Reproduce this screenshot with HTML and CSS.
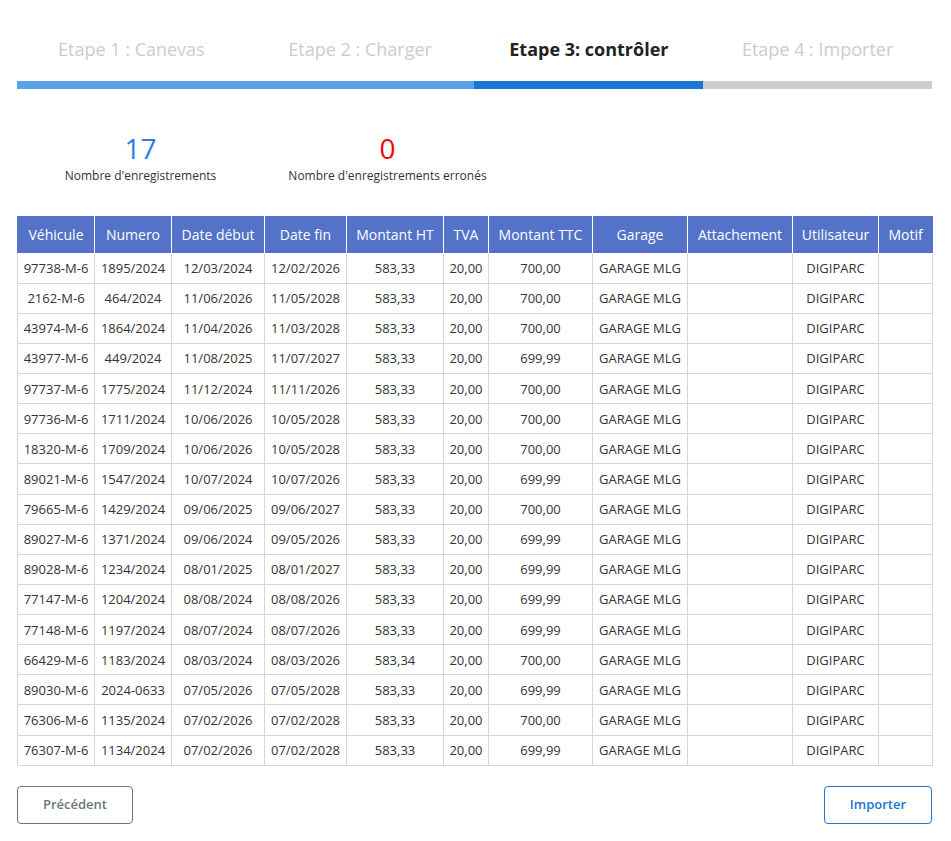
FILE: index.html
```html
<!DOCTYPE html>
<html lang="fr">
<head>
<meta charset="utf-8">
<title>Import</title>
<link rel="stylesheet" href="styles.css">
</head>
<body>
<div class="page">
  <div class="steps">
    <div class="step">Etape 1 : Canevas</div>
    <div class="step">Etape 2 : Charger</div>
    <div class="step active">Etape 3: contrôler</div>
    <div class="step">Etape 4 : Importer</div>
  </div>
  <div class="progress">
    <div class="seg done"></div>
    <div class="seg current"></div>
    <div class="seg todo"></div>
  </div>
  <div class="stats">
    <div class="stat"><div class="num ok">17</div><div class="lbl">Nombre d'enregistrements</div></div>
    <div class="stat"><div class="num err">0</div><div class="lbl">Nombre d'enregistrements erronés</div></div>
  </div>
  <table class="grid">
    <colgroup>
      <col style="width:77px"><col style="width:77px"><col style="width:93px"><col style="width:82px"><col style="width:97px"><col style="width:45px"><col style="width:104px"><col style="width:95px"><col style="width:105px"><col style="width:86px"><col style="width:54px">
    </colgroup>
    <thead>
      <tr><th>Véhicule</th><th>Numero</th><th>Date début</th><th>Date fin</th><th>Montant HT</th><th>TVA</th><th>Montant TTC</th><th>Garage</th><th>Attachement</th><th>Utilisateur</th><th>Motif</th></tr>
    </thead>
    <tbody>
      <tr><td>97738-M-6</td><td>1895/2024</td><td>12/03/2024</td><td>12/02/2026</td><td>583,33</td><td>20,00</td><td>700,00</td><td>GARAGE MLG</td><td></td><td>DIGIPARC</td><td></td></tr>
      <tr><td>2162-M-6</td><td>464/2024</td><td>11/06/2026</td><td>11/05/2028</td><td>583,33</td><td>20,00</td><td>700,00</td><td>GARAGE MLG</td><td></td><td>DIGIPARC</td><td></td></tr>
      <tr><td>43974-M-6</td><td>1864/2024</td><td>11/04/2026</td><td>11/03/2028</td><td>583,33</td><td>20,00</td><td>700,00</td><td>GARAGE MLG</td><td></td><td>DIGIPARC</td><td></td></tr>
      <tr><td>43977-M-6</td><td>449/2024</td><td>11/08/2025</td><td>11/07/2027</td><td>583,33</td><td>20,00</td><td>699,99</td><td>GARAGE MLG</td><td></td><td>DIGIPARC</td><td></td></tr>
      <tr><td>97737-M-6</td><td>1775/2024</td><td>11/12/2024</td><td>11/11/2026</td><td>583,33</td><td>20,00</td><td>700,00</td><td>GARAGE MLG</td><td></td><td>DIGIPARC</td><td></td></tr>
      <tr><td>97736-M-6</td><td>1711/2024</td><td>10/06/2026</td><td>10/05/2028</td><td>583,33</td><td>20,00</td><td>700,00</td><td>GARAGE MLG</td><td></td><td>DIGIPARC</td><td></td></tr>
      <tr><td>18320-M-6</td><td>1709/2024</td><td>10/06/2026</td><td>10/05/2028</td><td>583,33</td><td>20,00</td><td>700,00</td><td>GARAGE MLG</td><td></td><td>DIGIPARC</td><td></td></tr>
      <tr><td>89021-M-6</td><td>1547/2024</td><td>10/07/2024</td><td>10/07/2026</td><td>583,33</td><td>20,00</td><td>699,99</td><td>GARAGE MLG</td><td></td><td>DIGIPARC</td><td></td></tr>
      <tr><td>79665-M-6</td><td>1429/2024</td><td>09/06/2025</td><td>09/06/2027</td><td>583,33</td><td>20,00</td><td>700,00</td><td>GARAGE MLG</td><td></td><td>DIGIPARC</td><td></td></tr>
      <tr><td>89027-M-6</td><td>1371/2024</td><td>09/06/2024</td><td>09/05/2026</td><td>583,33</td><td>20,00</td><td>699,99</td><td>GARAGE MLG</td><td></td><td>DIGIPARC</td><td></td></tr>
      <tr><td>89028-M-6</td><td>1234/2024</td><td>08/01/2025</td><td>08/01/2027</td><td>583,33</td><td>20,00</td><td>699,99</td><td>GARAGE MLG</td><td></td><td>DIGIPARC</td><td></td></tr>
      <tr><td>77147-M-6</td><td>1204/2024</td><td>08/08/2024</td><td>08/08/2026</td><td>583,33</td><td>20,00</td><td>699,99</td><td>GARAGE MLG</td><td></td><td>DIGIPARC</td><td></td></tr>
      <tr><td>77148-M-6</td><td>1197/2024</td><td>08/07/2024</td><td>08/07/2026</td><td>583,33</td><td>20,00</td><td>699,99</td><td>GARAGE MLG</td><td></td><td>DIGIPARC</td><td></td></tr>
      <tr><td>66429-M-6</td><td>1183/2024</td><td>08/03/2024</td><td>08/03/2026</td><td>583,34</td><td>20,00</td><td>700,00</td><td>GARAGE MLG</td><td></td><td>DIGIPARC</td><td></td></tr>
      <tr><td>89030-M-6</td><td>2024-0633</td><td>07/05/2026</td><td>07/05/2028</td><td>583,33</td><td>20,00</td><td>699,99</td><td>GARAGE MLG</td><td></td><td>DIGIPARC</td><td></td></tr>
      <tr><td>76306-M-6</td><td>1135/2024</td><td>07/02/2026</td><td>07/02/2028</td><td>583,33</td><td>20,00</td><td>700,00</td><td>GARAGE MLG</td><td></td><td>DIGIPARC</td><td></td></tr>
      <tr><td>76307-M-6</td><td>1134/2024</td><td>07/02/2026</td><td>07/02/2028</td><td>583,33</td><td>20,00</td><td>699,99</td><td>GARAGE MLG</td><td></td><td>DIGIPARC</td><td></td></tr>
    </tbody>
  </table>
  <div class="actions">
    <button class="btn prev">Précédent</button>
    <button class="btn next">Importer</button>
  </div>
</div>
</body>
</html>
```

FILE: styles.css
```css
* { box-sizing: border-box; }
html, body { margin: 0; padding: 0; background: #fff; }
body {
  font-family: "Open Sans", "Noto Sans", "Liberation Sans", sans-serif;
  color: #333;
}
.page {
  width: 915px;
  margin-left: 17px;
  padding-top: 37px;
}
.steps {
  display: grid;
  grid-template-columns: repeat(4, 1fr);
}
.step {
  text-align: center;
  font-size: 18px;
  line-height: 24px;
  color: #cccccc;
}
.step.active {
  color: #222;
  font-weight: 700;
}
.progress {
  display: flex;
  height: 8px;
  margin-top: 20px;
}
.seg.done { width: 457px; background: #5aa2e6; }
.seg.current { width: 229px; background: #1976d2; }
.seg.todo { flex: 1; background: #cccccc; }
.stats {
  display: flex;
  margin-top: 41px;
}
.stat {
  width: 247px;
  text-align: center;
}
.num {
  font-size: 28px;
  line-height: 36px;
}
.num.ok { color: #2b7de9; }
.num.err { color: #ff0000; }
.lbl {
  font-size: 12px;
  line-height: 14px;
  margin-top: 3px;
  color: #333;
}
.grid {
  width: 915px;
  margin-top: 33px;
  border-collapse: collapse;
  table-layout: fixed;
  font-size: 13px;
}
.grid th {
  background: #5472c8;
  color: #fff;
  font-weight: 400;
  font-size: 14px;
  height: 37px;
  padding: 0 4px;
  border: 1px solid #fff;
  border-top: none;
  white-space: nowrap;
}
.grid th:first-child { border-left: 1px solid #5472c8; }
.grid th:last-child { border-right: 1px solid #5472c8; }
.grid td {
  height: 30.125px;
  padding: 0 2px;
  text-align: center;
  border: 1px solid #d6d6d6;
  white-space: nowrap;
  color: #333;
}
.actions {
  display: flex;
  justify-content: space-between;
  margin-top: 20px;
}
.btn {
  font-family: "Open Sans", "Noto Sans", "Liberation Sans", sans-serif;
  font-size: 13px;
  font-weight: 600;
  height: 38px;
  padding: 0 0 2px;
  background: #fff;
  border-radius: 4px;
  cursor: pointer;
}
.btn.prev {
  width: 116px;
  border: 1px solid #6c757d;
  color: #6c757d;
}
.btn.next {
  width: 108px;
  border: 1px solid #1976d2;
  color: #1976d2;
}
```
